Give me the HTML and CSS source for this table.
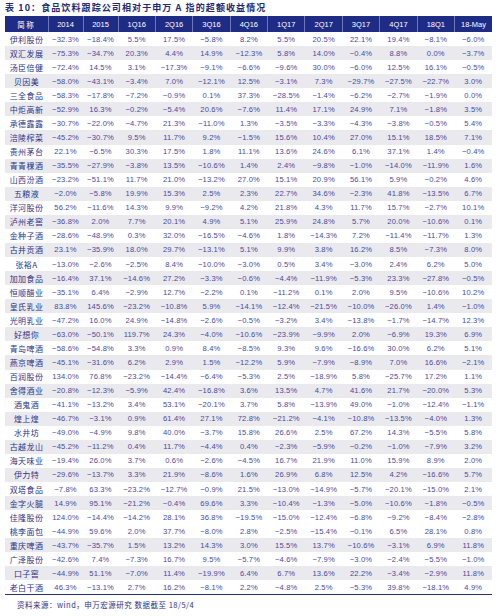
FILE: index.html
```html
<!DOCTYPE html>
<html lang="zh-CN">
<head>
<meta charset="utf-8">
<title>表 10</title>
<link rel="stylesheet" href="styles.css">
</head>
<body>
<div class="page">
  <div class="title">表 10：食品饮料跟踪公司相对于申万 A 指的超额收益情况</div>
  <table class="t">
    <colgroup>
      <col class="c-name"><col class="c-y"><col class="c-y">
      <col class="c-q"><col class="c-q"><col class="c-q"><col class="c-q"><col class="c-q"><col class="c-q"><col class="c-q"><col class="c-q"><col class="c-q"><col class="c-q">
    </colgroup>
    <thead>
      <tr><th>简称</th><th>2014</th><th>2015</th><th>1Q16</th><th>2Q16</th><th>3Q16</th><th>4Q16</th><th>1Q17</th><th>2Q17</th><th>3Q17</th><th>4Q17</th><th>18Q1</th><th>18-May</th></tr>
    </thead>
    <tbody>
      <tr><td>伊利股份</td><td>−32.3%</td><td>−18.4%</td><td>5.5%</td><td>17.5%</td><td>−5.8%</td><td>8.2%</td><td>5.5%</td><td>20.5%</td><td>22.1%</td><td>19.4%</td><td>−8.1%</td><td>−6.0%</td></tr>
      <tr class="g"><td>双汇发展</td><td>−75.3%</td><td>−34.7%</td><td>20.3%</td><td>4.4%</td><td>14.9%</td><td>−12.3%</td><td>5.8%</td><td>14.0%</td><td>−0.4%</td><td>8.8%</td><td>0.0%</td><td>−3.7%</td></tr>
      <tr><td>汤臣倍健</td><td>−72.4%</td><td>14.5%</td><td>3.1%</td><td>−17.3%</td><td>−9.1%</td><td>−6.6%</td><td>−9.6%</td><td>30.0%</td><td>−6.0%</td><td>12.5%</td><td>16.1%</td><td>−0.5%</td></tr>
      <tr class="g"><td>贝因美</td><td>−58.0%</td><td>−43.1%</td><td>−3.4%</td><td>7.0%</td><td>−12.1%</td><td>12.5%</td><td>−3.1%</td><td>7.3%</td><td>−29.7%</td><td>−27.5%</td><td>−22.7%</td><td>3.0%</td></tr>
      <tr><td>三全食品</td><td>−58.3%</td><td>−17.8%</td><td>−7.2%</td><td>−0.9%</td><td>0.1%</td><td>37.3%</td><td>−28.5%</td><td>−1.4%</td><td>−6.2%</td><td>−2.7%</td><td>−1.9%</td><td>0.0%</td></tr>
      <tr class="g"><td>中炬高新</td><td>−52.9%</td><td>16.3%</td><td>−0.2%</td><td>−5.4%</td><td>20.6%</td><td>−7.6%</td><td>11.4%</td><td>17.1%</td><td>24.9%</td><td>7.1%</td><td>−1.8%</td><td>3.5%</td></tr>
      <tr><td>承德露露</td><td>−30.7%</td><td>−22.0%</td><td>−4.7%</td><td>21.3%</td><td>−11.0%</td><td>1.3%</td><td>−3.5%</td><td>−3.3%</td><td>−4.3%</td><td>−3.8%</td><td>−0.5%</td><td>5.4%</td></tr>
      <tr class="g"><td>涪陵榨菜</td><td>−45.2%</td><td>−30.7%</td><td>9.5%</td><td>11.7%</td><td>9.2%</td><td>−1.5%</td><td>15.6%</td><td>10.4%</td><td>27.0%</td><td>15.1%</td><td>18.5%</td><td>7.1%</td></tr>
      <tr><td>贵州茅台</td><td>22.1%</td><td>−6.5%</td><td>30.3%</td><td>17.5%</td><td>1.8%</td><td>11.1%</td><td>13.6%</td><td>24.6%</td><td>6.1%</td><td>37.1%</td><td>1.4%</td><td>−0.4%</td></tr>
      <tr class="g"><td>青青稞酒</td><td>−35.5%</td><td>−27.9%</td><td>−3.8%</td><td>13.5%</td><td>−10.6%</td><td>1.4%</td><td>2.4%</td><td>−9.8%</td><td>−1.0%</td><td>−14.0%</td><td>−11.9%</td><td>1.6%</td></tr>
      <tr><td>山西汾酒</td><td>−23.2%</td><td>−51.1%</td><td>11.7%</td><td>21.0%</td><td>−13.2%</td><td>27.0%</td><td>15.1%</td><td>20.9%</td><td>56.1%</td><td>5.9%</td><td>−0.2%</td><td>4.6%</td></tr>
      <tr class="g"><td>五粮液</td><td>−2.0%</td><td>−5.8%</td><td>19.9%</td><td>15.3%</td><td>2.5%</td><td>2.3%</td><td>22.7%</td><td>34.6%</td><td>−2.3%</td><td>41.8%</td><td>−13.5%</td><td>6.7%</td></tr>
      <tr><td>洋河股份</td><td>56.2%</td><td>−11.6%</td><td>14.3%</td><td>9.9%</td><td>−9.2%</td><td>4.2%</td><td>21.8%</td><td>4.3%</td><td>11.7%</td><td>15.7%</td><td>−2.7%</td><td>10.1%</td></tr>
      <tr class="g"><td>泸州老窖</td><td>−36.8%</td><td>2.0%</td><td>7.7%</td><td>20.1%</td><td>4.9%</td><td>5.1%</td><td>25.9%</td><td>24.8%</td><td>5.7%</td><td>20.0%</td><td>−10.6%</td><td>0.1%</td></tr>
      <tr><td>金种子酒</td><td>−28.6%</td><td>−48.9%</td><td>0.3%</td><td>32.0%</td><td>−16.5%</td><td>−4.6%</td><td>1.8%</td><td>−14.3%</td><td>7.2%</td><td>−11.4%</td><td>−11.7%</td><td>1.3%</td></tr>
      <tr class="g"><td>古井贡酒</td><td>23.1%</td><td>−35.9%</td><td>18.0%</td><td>29.7%</td><td>−13.1%</td><td>5.1%</td><td>9.9%</td><td>3.8%</td><td>16.2%</td><td>8.5%</td><td>−7.3%</td><td>8.0%</td></tr>
      <tr><td>张裕A</td><td>−13.0%</td><td>−2.6%</td><td>−2.5%</td><td>8.4%</td><td>−10.0%</td><td>−3.0%</td><td>0.5%</td><td>3.4%</td><td>−3.0%</td><td>2.4%</td><td>6.2%</td><td>5.0%</td></tr>
      <tr class="g"><td>加加食品</td><td>−16.4%</td><td>37.1%</td><td>−14.6%</td><td>27.2%</td><td>−3.3%</td><td>−0.6%</td><td>−4.4%</td><td>−11.9%</td><td>−5.3%</td><td>23.3%</td><td>−27.8%</td><td>−0.5%</td></tr>
      <tr><td>恒顺醋业</td><td>−35.1%</td><td>6.4%</td><td>−2.9%</td><td>12.7%</td><td>−2.2%</td><td>0.1%</td><td>−11.2%</td><td>0.1%</td><td>2.0%</td><td>9.5%</td><td>−10.6%</td><td>10.2%</td></tr>
      <tr class="g"><td>皇氏乳业</td><td>83.8%</td><td>145.6%</td><td>−23.2%</td><td>−10.8%</td><td>5.9%</td><td>−14.1%</td><td>−12.4%</td><td>−21.5%</td><td>−10.0%</td><td>−26.0%</td><td>1.4%</td><td>−1.0%</td></tr>
      <tr><td>光明乳业</td><td>−47.2%</td><td>16.0%</td><td>24.9%</td><td>−14.8%</td><td>−2.6%</td><td>−0.5%</td><td>−3.2%</td><td>3.4%</td><td>−13.8%</td><td>−1.7%</td><td>−14.7%</td><td>12.3%</td></tr>
      <tr class="g"><td>好想你</td><td>−63.0%</td><td>−50.1%</td><td>119.7%</td><td>24.3%</td><td>−4.0%</td><td>−10.6%</td><td>−23.9%</td><td>−9.9%</td><td>2.0%</td><td>−6.9%</td><td>19.3%</td><td>6.9%</td></tr>
      <tr><td>青岛啤酒</td><td>−58.6%</td><td>−54.8%</td><td>3.3%</td><td>0.9%</td><td>8.4%</td><td>−8.5%</td><td>9.3%</td><td>9.6%</td><td>−16.6%</td><td>30.0%</td><td>6.2%</td><td>5.1%</td></tr>
      <tr class="g"><td>燕京啤酒</td><td>−45.1%</td><td>−31.6%</td><td>6.2%</td><td>2.9%</td><td>1.5%</td><td>−12.2%</td><td>5.9%</td><td>−7.9%</td><td>−8.9%</td><td>7.0%</td><td>16.6%</td><td>−2.1%</td></tr>
      <tr><td>百润股份</td><td>134.0%</td><td>76.8%</td><td>−23.2%</td><td>−14.4%</td><td>−6.4%</td><td>−5.3%</td><td>2.5%</td><td>−18.9%</td><td>5.8%</td><td>−25.7%</td><td>17.2%</td><td>1.1%</td></tr>
      <tr class="g"><td>舍得酒业</td><td>−20.8%</td><td>−12.3%</td><td>−5.9%</td><td>42.4%</td><td>−16.8%</td><td>3.6%</td><td>13.5%</td><td>4.7%</td><td>41.6%</td><td>21.7%</td><td>−20.0%</td><td>5.3%</td></tr>
      <tr><td>酒鬼酒</td><td>−41.1%</td><td>−13.2%</td><td>3.4%</td><td>53.1%</td><td>−20.1%</td><td>3.7%</td><td>5.8%</td><td>−13.9%</td><td>49.0%</td><td>−1.0%</td><td>−12.4%</td><td>−1.1%</td></tr>
      <tr class="g"><td>煌上煌</td><td>−46.7%</td><td>−3.1%</td><td>0.9%</td><td>61.4%</td><td>27.1%</td><td>72.8%</td><td>−21.2%</td><td>−4.1%</td><td>−10.8%</td><td>−13.5%</td><td>−4.0%</td><td>1.3%</td></tr>
      <tr><td>水井坊</td><td>−49.0%</td><td>−4.9%</td><td>9.8%</td><td>40.0%</td><td>−3.7%</td><td>15.8%</td><td>26.6%</td><td>2.5%</td><td>67.2%</td><td>14.3%</td><td>−5.5%</td><td>5.8%</td></tr>
      <tr class="g"><td>古越龙山</td><td>−45.2%</td><td>−11.2%</td><td>0.4%</td><td>11.7%</td><td>−4.4%</td><td>0.4%</td><td>−2.3%</td><td>−5.9%</td><td>−0.2%</td><td>−1.0%</td><td>−7.9%</td><td>3.2%</td></tr>
      <tr><td>海天味业</td><td>−19.4%</td><td>26.0%</td><td>3.7%</td><td>0.6%</td><td>−2.6%</td><td>−4.5%</td><td>16.7%</td><td>21.9%</td><td>11.0%</td><td>15.9%</td><td>8.9%</td><td>2.0%</td></tr>
      <tr class="g"><td>伊力特</td><td>−29.6%</td><td>−13.7%</td><td>3.3%</td><td>21.9%</td><td>−8.6%</td><td>1.6%</td><td>26.9%</td><td>6.8%</td><td>12.5%</td><td>4.2%</td><td>−16.6%</td><td>5.7%</td></tr>
      <tr><td>双塔食品</td><td>−7.8%</td><td>63.3%</td><td>−23.2%</td><td>−12.7%</td><td>−0.9%</td><td>21.5%</td><td>−13.0%</td><td>−14.9%</td><td>−5.7%</td><td>−20.1%</td><td>−15.0%</td><td>2.1%</td></tr>
      <tr class="g"><td>金字火腿</td><td>14.9%</td><td>95.1%</td><td>−21.2%</td><td>−0.4%</td><td>69.6%</td><td>3.3%</td><td>−10.4%</td><td>−1.3%</td><td>−5.0%</td><td>−10.6%</td><td>−1.8%</td><td>−0.5%</td></tr>
      <tr><td>佳隆股份</td><td>124.0%</td><td>−14.4%</td><td>−14.2%</td><td>28.1%</td><td>36.8%</td><td>−19.5%</td><td>−15.0%</td><td>−12.4%</td><td>−6.8%</td><td>−9.2%</td><td>−8.4%</td><td>−2.8%</td></tr>
      <tr><td>桃李面包</td><td>−44.9%</td><td>59.6%</td><td>2.0%</td><td>37.7%</td><td>−8.0%</td><td>2.8%</td><td>−2.5%</td><td>−15.4%</td><td>−0.1%</td><td>6.5%</td><td>28.1%</td><td>0.8%</td></tr>
      <tr class="g"><td>重庆啤酒</td><td>−43.7%</td><td>−35.7%</td><td>1.5%</td><td>13.2%</td><td>14.3%</td><td>3.0%</td><td>15.5%</td><td>13.7%</td><td>−10.6%</td><td>−3.1%</td><td>6.9%</td><td>11.8%</td></tr>
      <tr><td>广泽股份</td><td>−42.6%</td><td>7.4%</td><td>−7.3%</td><td>16.7%</td><td>9.5%</td><td>−5.7%</td><td>−4.6%</td><td>−7.9%</td><td>−3.0%</td><td>−2.4%</td><td>−5.5%</td><td>−1.0%</td></tr>
      <tr class="g"><td>口子窖</td><td>−44.9%</td><td>51.1%</td><td>−7.0%</td><td>11.4%</td><td>−19.9%</td><td>6.4%</td><td>6.7%</td><td>13.6%</td><td>22.2%</td><td>−3.4%</td><td>−2.9%</td><td>11.8%</td></tr>
      <tr><td>老白干酒</td><td>46.3%</td><td>−13.1%</td><td>2.7%</td><td>16.2%</td><td>−8.1%</td><td>2.2%</td><td>−4.8%</td><td>2.5%</td><td>−5.3%</td><td>39.8%</td><td>−18.1%</td><td>4.9%</td></tr>
    </tbody>
  </table>
  <div class="source">资料来源：wind，申万宏源研究 数据截至 18/5/4</div>
</div>
</body>
</html>
```

FILE: styles.css
```css
* { box-sizing: border-box; }
html, body {
  margin: 0;
  padding: 0;
  background: #ffffff;
}
.page {
  width: 500px;
  height: 616px;
  padding: 0 8px 0 5px;
  font-family: "Liberation Sans", Arial, "Noto Sans CJK SC", sans-serif;
}
.title {
  height: 16px;
  line-height: 16px;
  font-family: "Noto Sans CJK SC", sans-serif;
  font-size: 9px;
  font-weight: 700;
  letter-spacing: 1.1px;
  color: #1f2a72;
  white-space: nowrap;
}
.t {
  width: 487px;
  border-collapse: collapse;
  table-layout: fixed;
  border-bottom: 1.5px solid #2a3170;
}
.c-name { width: 43px; }
.c-y { width: 35px; }
.c-q { width: 37.4px; }
.t th {
  height: 16px;
  padding: 0;
  background: #1f2c86;
  color: #ffffff;
  font-size: 7.5px;
  font-weight: 400;
  text-align: center;
  border-left: 1px solid #6f78b6;
  white-space: nowrap;
}
.t th:first-child {
  border-left: none;
  font-family: "Noto Sans CJK SC", sans-serif;
  letter-spacing: 1.5px;
  font-size: 7.5px;
}
.t td {
  height: 14.07px;
  padding: 0;
  text-align: center;
  font-size: 7.6px;
  color: #4a4a9c;
  white-space: nowrap;
  letter-spacing: 0.15px;
}
.t td:first-child {
  font-family: "Noto Sans CJK SC", sans-serif;
  font-size: 8px;
  letter-spacing: 0.4px;
  color: #2c3486;
}
.t tr.g td {
  background: #e9e9ee;
}
.source {
  padding: 4px 0 0 12px;
  font-family: "Noto Sans CJK SC", sans-serif;
  font-size: 7.5px;
  letter-spacing: 0.5px;
  color: #2c3486;
  white-space: nowrap;
}
```
